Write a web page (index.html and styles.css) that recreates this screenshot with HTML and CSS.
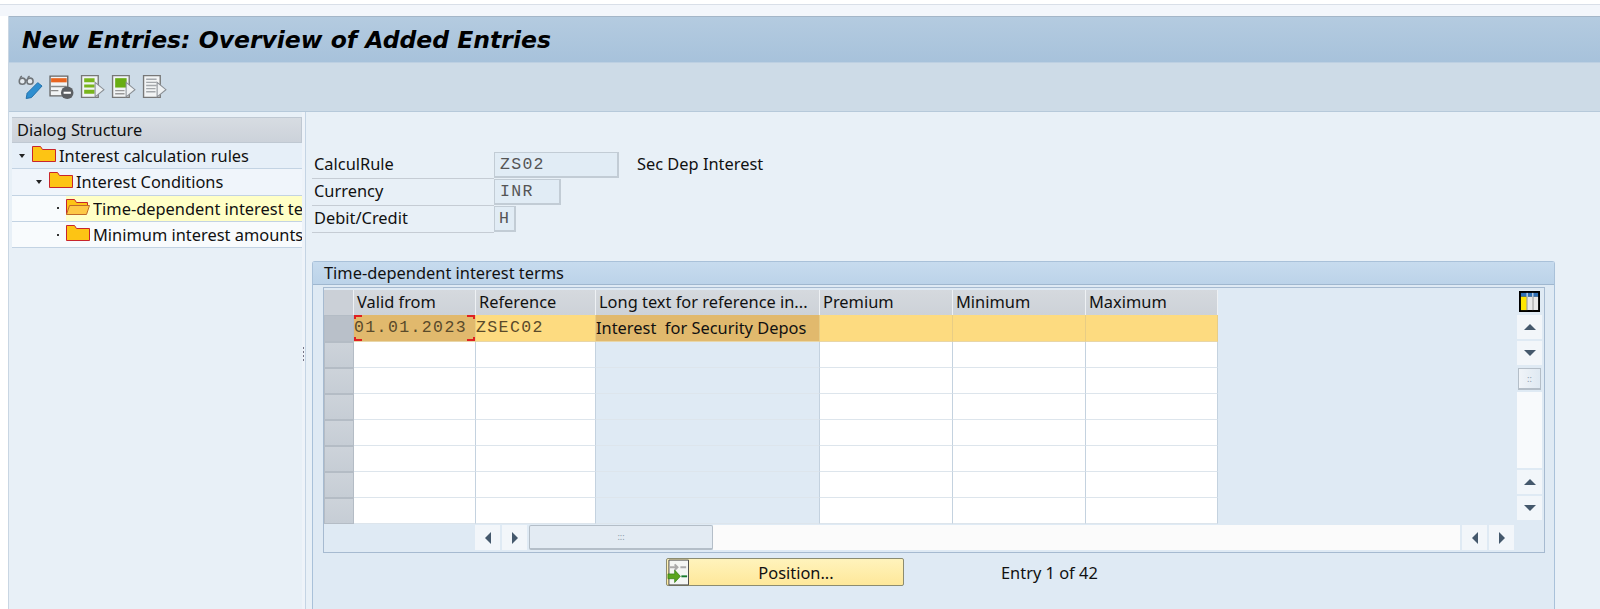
FILE: index.html
```html
<!DOCTYPE html>
<html lang="en">
<head>
<meta charset="utf-8">
<title>New Entries: Overview of Added Entries</title>
<link rel="stylesheet" href="styles.css">
</head>
<body>
<svg class="defs" width="0" height="0" aria-hidden="true">
  <defs>
    <symbol id="folder" viewBox="0 0 24 17">
      <path d="M.5 16.500V1.500h8l2 3h13v12z" fill="#fdc414" stroke="#c8252c"/>
    </symbol>
    <symbol id="folder-open" viewBox="0 0 24 17">
      <path d="M.5 16.500V1.500h8l2 3h11v3" fill="#fdc414" stroke="#c8252c"/>
      <path d="M.5 16.500l3-9h20l-3 9z" fill="#fdc845" stroke="#c06a28"/>
    </symbol>
    <symbol id="doc-tri" viewBox="0 0 24 24">
      <path d="M1.500 1.500h16v21h-16z" fill="#f2f4f5" stroke="#777" stroke-width="1.300"/>
    </symbol>
  </defs>
</svg>

<div class="top-strip"></div>
<div class="window">
  <header class="title-bar"><h1>New Entries: Overview of Added Entries</h1></header>
  <nav class="toolbar">
    <svg class="tool" viewBox="0 0 26 24" aria-hidden="true">
      <circle cx="4.500" cy="6.500" r="3.200" fill="#e6ecf1" stroke="#6f7478" stroke-width="1.600"/>
      <circle cx="12.500" cy="6.500" r="3.200" fill="#e6ecf1" stroke="#6f7478" stroke-width="1.600"/>
      <path d="M2 3l2-2M10 3l2-2M7.500 5.500h2" stroke="#6f7478" stroke-width="1.400" fill="none"/>
      <path d="M20.500 8l4.500 3.500-11 12-5.500 1 1-5.500z" fill="#2f8fd0" stroke="#1f6da8"/>
    </svg>
    <svg class="tool" viewBox="0 0 24 24" aria-hidden="true">
      <path d="M1 2h17v19H1z" fill="#f2f4f5" stroke="#666" stroke-width="1.300"/>
      <path d="M2 4h15v4H2z" fill="#e8641f"/>
      <path d="M2 12h15M2 16h7" stroke="#888" stroke-width="1.300"/>
      <circle cx="17.500" cy="18" r="6" fill="#5c5f63"/>
      <path d="M14 18h7" stroke="#fff" stroke-width="2"/>
    </svg>
    <svg class="tool" viewBox="0 0 24 24" aria-hidden="true">
      <use href="#doc-tri"/>
      <path d="M4 4h10v4H4zM4 10h10v3H4zM4 15h10v4H4z" fill="#79b51c"/>
      <path d="M14.500 8v14l8.500-7z" fill="#eef1f3" stroke="#8a8f94"/>
    </svg>
    <svg class="tool" viewBox="0 0 24 24" aria-hidden="true">
      <use href="#doc-tri"/>
      <path d="M4 4h11v9H4z" fill="#68ad12"/>
      <path d="M4 16h9M4 19h9" stroke="#999" stroke-width="1.300"/>
      <path d="M14.500 8v14l8.500-7z" fill="#eef1f3" stroke="#8a8f94"/>
    </svg>
    <svg class="tool" viewBox="0 0 24 24" aria-hidden="true">
      <use href="#doc-tri"/>
      <path d="M4 5h10M4 8h10M4 11h10M4 14h9M4 17h9" stroke="#a4a8ac" stroke-width="1.300"/>
      <path d="M14.500 8v14l8.500-7z" fill="#eef1f3" stroke="#8a8f94"/>
    </svg>
  </nav>

  <div class="main">
    <aside class="nav-panel">
      <div class="nav-head">Dialog Structure</div>
      <ul class="tree">
        <li class="tree-row lvl-1"><span class="arrow-open"></span><svg class="folder"><use href="#folder"/></svg><span>Interest calculation rules</span></li>
        <li class="tree-row lvl-2"><span class="arrow-open"></span><svg class="folder"><use href="#folder"/></svg><span>Interest Conditions</span></li>
        <li class="tree-row lvl-3 leaf"><span class="dot"></span><span class="selected"><svg class="folder"><use href="#folder-open"/></svg><span class="clip">Time-dependent interest terms</span></span></li>
        <li class="tree-row lvl-3 leaf"><span class="dot"></span><svg class="folder"><use href="#folder"/></svg><span>Minimum interest amounts</span></li>
      </ul>
    </aside>
    <div class="splitter"><i></i><i></i><i></i><i></i></div>
    <section class="content">
      <div class="form">
        <div class="form-row">
          <label>CalculRule</label><span class="field w-zs">ZS02</span><span class="desc">Sec Dep Interest</span>
        </div>
        <div class="form-row">
          <label>Currency</label><span class="field w-inr">INR</span>
        </div>
        <div class="form-row">
          <label>Debit/Credit</label><span class="field w-h">H</span>
        </div>
      </div>

      <div class="group">
        <div class="group-head">Time-dependent interest terms</div>
        <div class="group-body">
          <div class="frame">
            <div class="frame-top">
              <div class="table">
                <div class="th corner"></div>
                <div class="th">Valid from</div>
                <div class="th">Reference</div>
                <div class="th">Long text for reference in...</div>
                <div class="th">Premium</div>
                <div class="th">Minimum</div>
                <div class="th">Maximum</div>

                <div class="rh rh-sel"></div>
                <div class="td sel dark mono focus">01.01.2023<b class="c tl"></b><b class="c tr"></b><b class="c bl"></b><b class="c br"></b></div>
                <div class="td sel mono">ZSEC02</div>
                <div class="td sel dark">Interest&nbsp; for Security Depos</div>
                <div class="td sel"></div><div class="td sel"></div><div class="td sel"></div>

                <div class="rh"></div><div class="td"></div><div class="td"></div><div class="td ro"></div><div class="td"></div><div class="td"></div><div class="td"></div>
                <div class="rh"></div><div class="td"></div><div class="td"></div><div class="td ro"></div><div class="td"></div><div class="td"></div><div class="td"></div>
                <div class="rh"></div><div class="td"></div><div class="td"></div><div class="td ro"></div><div class="td"></div><div class="td"></div><div class="td"></div>
                <div class="rh"></div><div class="td"></div><div class="td"></div><div class="td ro"></div><div class="td"></div><div class="td"></div><div class="td"></div>
                <div class="rh"></div><div class="td"></div><div class="td"></div><div class="td ro"></div><div class="td"></div><div class="td"></div><div class="td"></div>
                <div class="rh"></div><div class="td"></div><div class="td"></div><div class="td ro"></div><div class="td"></div><div class="td"></div><div class="td"></div>
                <div class="rh"></div><div class="td"></div><div class="td"></div><div class="td ro"></div><div class="td"></div><div class="td"></div><div class="td"></div>
              </div>
              <div class="vscroll">
                <div class="config">
                  <svg viewBox="0 0 22 22" aria-hidden="true">
                    <path d="M0 0h22v22H0z" fill="#000"/>
                    <path d="M2 2h18v4H2z" fill="#2f6fb5"/>
                    <path d="M2 6h6v14H2z" fill="#ffe600"/>
                    <path d="M9 6h5v14H9zM15 6h5v14h-5z" fill="#e8e8e8"/>
                    <path d="M8.500 2v18M14.500 2v18" stroke="#fff"/>
                  </svg>
                </div>
                <div class="sbtn"><span class="tri up"></span></div>
                <div class="sbtn"><span class="tri down"></span></div>
                <div class="vthumb"><span class="grip">::</span></div>
                <div class="vtrack"></div>
                <div class="sbtn"><span class="tri up"></span></div>
                <div class="sbtn"><span class="tri down"></span></div>
              </div>
            </div>
            <div class="hscroll">
              <div class="sbtn hb"><span class="tri left"></span></div>
              <div class="sbtn hb"><span class="tri right"></span></div>
              <div class="hthumb"><span class="grip">:::</span></div>
              <div class="htrack"></div>
              <div class="sbtn hb"><span class="tri left"></span></div>
              <div class="sbtn hb"><span class="tri right"></span></div>
            </div>
          </div>
          <div class="actions">
            <button class="pos-btn" type="button">
              <svg class="pos-icon" viewBox="0 0 23 27" aria-hidden="true">
                <path d="M2 .500h20.500v26H2z" fill="#f4f6f4" stroke="#444"/>
                <path d="M3 8h7M8 5l3 3-3 3M14 8h6" stroke="#aaa" stroke-width="2" fill="none"/>
                <path d="M1 15h7v-4l6 6.500-6 6.500v-4H1z" fill="#5aa51e" stroke="#2c7a12" stroke-width=".7"/>
                <path d="M15 17.500h6" stroke="#157a2c" stroke-width="2"/>
              </svg>
              <span>Position...</span>
            </button>
            <span class="entry">Entry 1 of 42</span>
          </div>
        </div>
      </div>
    </section>
  </div>
</div>
</body>
</html>
```

FILE: styles.css
```css
* { box-sizing: border-box; }
html, body { margin: 0; height: 609px; overflow: hidden; }
body {
  background: #fff;
  font-family: "Noto Sans", "Open Sans", sans-serif;
  font-size: 16.400px;
  color: #111;
}
.defs { position: absolute; }
.top-strip {
  height: 16px;
  background: #f3f6fb;
  border-top: 4px solid #fff;
  box-shadow: inset 0 1px 0 #d9dfe8;
}
.window {
  margin-left: 8px;
  height: 593px;
  display: flex;
  flex-direction: column;
  border-left: 1px solid #c9d6e3;
}
.title-bar {
  height: 46px;
  display: flex;
  align-items: center;
  padding-left: 13px;
  background: linear-gradient(#b4cbe0, #a7c2db);
  border-top: 1px solid #a4b6c8;
}
.title-bar h1 {
  margin: 0;
  font-family: "DejaVu Sans", sans-serif;
  font-size: 23.500px;
  font-weight: 700;
  font-style: italic;
  color: #000;
  white-space: nowrap;
}
.toolbar {
  height: 50px;
  display: flex;
  align-items: center;
  gap: 6px;
  padding: 0 0 2px 9px;
  background: #cddbe7;
  border-top: 1px solid #bdd0e2;
  border-bottom: 1px solid #b6c9da;
}
.tool { width: 25px; height: 25px; }

.main { flex: 1; display: flex; min-height: 0; background: #e8f0f7; }
.nav-panel { width: 293px; flex: none; padding: 5px 0 0 3px; }
.nav-head {
  height: 26px;
  padding-left: 5px;
  line-height: 24px;
  background: linear-gradient(#d7dce2, #ccd2da);
  border: 1px solid #bfc8d2;
  border-width: 1px 1px 1px 0;
  color: #111;
}
.tree { list-style: none; margin: 0; padding: 0; }
.tree-row {
  height: 26.300px;
  display: flex;
  align-items: center;
  white-space: nowrap;
  overflow: hidden;
  border-bottom: 1px solid #c3d3e3;
  background: #e6eff8;
}
.tree-row.leaf { background: #f8fbfd; }
.tree-row.lvl-2 { background: #f0f5fb; }
.lvl-1 { padding-left: 7px; }
.lvl-2 { padding-left: 24px; }
.lvl-3 { padding-left: 45px; }
.arrow-open {
  width: 0; height: 0;
  margin-right: 7px;
  border: 3px solid transparent;
  border-top: 4px solid #222;
  border-bottom: 0;
}
.dot { width: 2px; height: 2px; background: #333; flex: none; margin-right: 7px; }
.folder { width: 24px; height: 17px; flex: none; margin-right: 3px; margin-top: -4px; }
.selected {
  display: flex;
  align-items: center;
  flex: 1;
  min-width: 0;
  height: 25px;
  background: #ffffc6;
}
.clip { overflow: hidden; }

.splitter {
  width: 4px;
  flex: none;
  display: flex;
  flex-direction: column;
  justify-content: center;
  gap: 2px;
  padding-left: 1px;
  padding-bottom: 14px;
  background: #eef3f9;
  border-right: 1px solid #c4d4e4;
}
.splitter i { width: 1px; height: 2px; background: #778; }

.content { flex: 1; min-width: 0; padding: 40px 45px 0 6px; }
.form { padding-bottom: 28px; }
.form-row { display: flex; height: 27px; align-items: stretch; }
.form-row label {
  width: 182px;
  padding: 0 0 0 2px;
  line-height: 24px;
  border-bottom: 1px solid #c5ccd4;
}
.field {
  height: 26px;
  padding-left: 5px;
  font-family: "Liberation Mono", monospace;
  font-size: 16.500px;
  letter-spacing: 1.300px;
  line-height: 23px;
  color: #555;
  background: #e1ecf5;
  border: 2px solid #c2ccd5;
  border-width: 1px 2px 2px 1px;
}
.w-zs { width: 125px; }
.w-inr { width: 67px; }
.w-h { width: 22px; padding-left: 4px; }
.desc { padding-left: 18px; line-height: 24px; }

.group {
  height: 362px;
  background: #dfeaf4;
  border: 1px solid #a9c1d9;
  border-bottom: 0;
  border-radius: 3px 3px 0 0;
}
.group-head {
  height: 23px;
  padding-left: 11px;
  line-height: 21px;
  background: linear-gradient(#c7dbee, #bcd3e9);
  border-bottom: 1px solid #9fb7cf;
}
.group-body { padding: 2px 9px 0 10px; }
.frame {
  height: 266px;
  display: flex;
  flex-direction: column;
  border: 1px solid #a6bad0;
}
.frame-top { flex: 1; display: flex; justify-content: space-between; padding-top: 2px; min-height: 0; }
.table {
  display: grid;
  grid-template-columns: 30px 122px 120px 224px 133px 133px 132px;
  grid-template-rows: 25px 27px repeat(7, 26px);
  width: 894px;
  height: 234px;
}
.th {
  padding-left: 3px;
  line-height: 24px;
  white-space: nowrap;
  overflow: hidden;
  background: linear-gradient(#d5d9de, #cdd2d8);
  border-right: 1px solid #eef1f4;
}
.th.corner { background: #cbd0d7; }
.rh { background: linear-gradient(#cdd3da, #c6cdd5); border: 1px solid #b4bcc5; }
.rh-sel { background: #b9c0c9; }
.td {
  background: #fff;
  border-right: 1px solid #c4d2df;
  border-bottom: 1px solid #dde5ec;
  white-space: nowrap;
  line-height: 25px;
}
.td.ro { background: #dfeaf4; }
.sel { background: #fddb80; border-right-color: #e8cd85; border-bottom-color: #e8d6a8; }
.sel.dark { background: #e1b96d; }
.mono {
  font-family: "Liberation Mono", monospace;
  font-size: 16.500px;
  letter-spacing: 1.400px;
  color: #5a4a2a;
}
.focus { position: relative; }
.c { position: absolute; width: 8px; height: 4px; border: 0 solid #e02020; }
.tl { left: 0; top: 0; border-width: 2px 0 0 2px; }
.tr { right: 0; top: 0; border-width: 2px 2px 0 0; }
.bl { left: 0; bottom: 0; border-width: 0 0 2px 2px; }
.br { right: 0; bottom: 0; border-width: 0 2px 2px 0; }

.vscroll { width: 25px; margin-right: 2px; display: flex; flex-direction: column; gap: 2px; }
.config { height: 23px; padding: 1px 2px; }
.config svg { display: block; width: 21px; height: 21px; }
.sbtn {
  height: 24px;
  display: flex;
  align-items: center;
  justify-content: center;
  background: #f2f6fa;
}
.tri { width: 0; height: 0; border: 0 solid transparent; }
.tri.up { border-width: 0 6px 6px; border-bottom-color: #44586c; }
.tri.down { border-width: 6px 6px 0; border-top-color: #44586c; }
.tri.left { border-width: 6px 6px 6px 0; border-right-color: #44586c; }
.tri.right { border-width: 6px 0 6px 6px; border-left-color: #44586c; }
.vthumb {
  height: 22px;
  margin: 1px 1px 0;
  display: flex;
  align-items: center;
  justify-content: center;
  background: linear-gradient(90deg, #f0f4f8, #dfe9f2);
  border: 1px solid #b4bec8;
  border-bottom-width: 2px;
}
.vtrack { height: 76px; background: #f8fafc; }
.grip { font-size: 9px; line-height: 10px; color: #8a99a8; }

.hscroll {
  height: 25px;
  margin-bottom: 2px;
  display: flex;
  gap: 2px;
  padding-left: 151px;
  padding-right: 30px;
}
.hb { width: 25px; height: 25px; }
.hthumb {
  width: 184px;
  display: flex;
  align-items: center;
  justify-content: center;
  background: #e3ebf3;
  border: 1px solid #b4bec8;
  border-bottom-width: 2px;
  border-radius: 2px;
}
.htrack { flex: 1; margin-left: -2px; background: #fbfbfb; }

.actions { display: flex; align-items: center; padding: 5px 0 0 343px; }
.pos-btn {
  width: 238px;
  height: 28px;
  display: flex;
  align-items: center;
  padding: 0;
  background: linear-gradient(#fff3bc, #fee89a);
  border: 1px solid #8c8c70;
  border-radius: 2px;
  font: inherit;
  color: #111;
}
.pos-btn span { flex: 1; text-align: center; }
.pos-icon { width: 22px; height: 27px; flex: none; }
.entry { padding-left: 97px; }
```
